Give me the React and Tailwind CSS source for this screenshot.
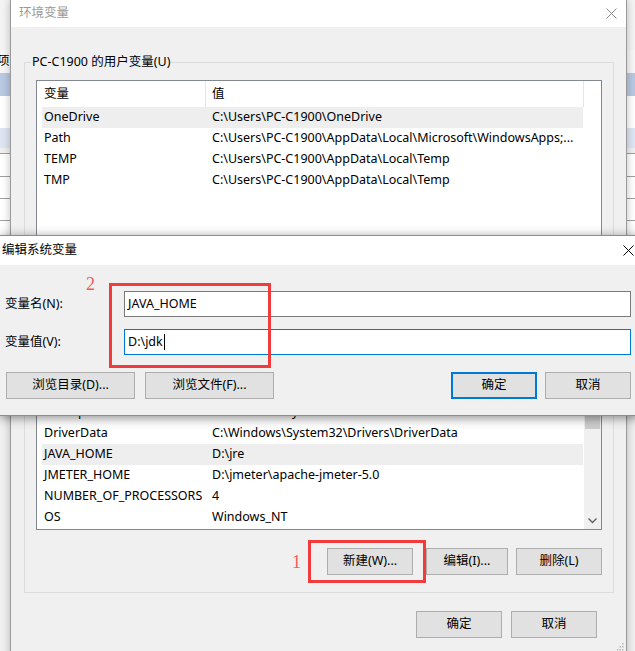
import React from 'react';

const userVars = [
  { name: 'OneDrive', value: 'C:\\Users\\PC-C1900\\OneDrive', active: true },
  { name: 'Path', value: 'C:\\Users\\PC-C1900\\AppData\\Local\\Microsoft\\WindowsApps;...' },
  { name: 'TEMP', value: 'C:\\Users\\PC-C1900\\AppData\\Local\\Temp' },
  { name: 'TMP', value: 'C:\\Users\\PC-C1900\\AppData\\Local\\Temp' },
];

const systemVars = [
  { name: 'ComSpec', value: 'C:\\Windows\\system32\\cmd.exe' },
  { name: 'DriverData', value: 'C:\\Windows\\System32\\Drivers\\DriverData' },
  { name: 'JAVA_HOME', value: 'D:\\jre', active: true },
  { name: 'JMETER_HOME', value: 'D:\\jmeter\\apache-jmeter-5.0' },
  { name: 'NUMBER_OF_PROCESSORS', value: '4' },
  { name: 'OS', value: 'Windows_NT' },
];

function CloseIcon({ color }) {
  return (
    <svg width="11" height="11" viewBox="0 0 11 11" fill="none">
      <path d="M0.5 0.5L10.5 10.5M10.5 0.5L0.5 10.5" stroke={color} strokeWidth="1" />
    </svg>
  );
}

function Button({ children, className = '', primary = false }) {
  return (
    <div
      className={
        primary
          ? `flex h-[27px] items-center justify-center border-2 border-[#0078d7] bg-[#e1e1e1] ${className}`
          : `flex h-[27px] items-center justify-center border border-[#adadad] bg-[#e1e1e1] ${className}`
      }
    >
      {children}
    </div>
  );
}

function Row({ item }) {
  return (
    <div
      className={`ml-[5px] flex h-[21px] w-[541px] shrink-0 items-center whitespace-nowrap ${
        item.active ? 'bg-[#eeeeee]' : ''
      }`}
    >
      <span className="w-[170px] pl-[2px]">{item.name}</span>
      <span>{item.value}</span>
    </div>
  );
}

function ListHeader() {
  return (
    <div className="flex h-[26px] shrink-0 items-center">
      <div className="flex h-full w-[169px] items-center border-r border-[#e5e5e5] pl-[7px]">变量</div>
      <div className="flex h-full w-[378px] items-center border-r border-[#e5e5e5] pl-[6px]">值</div>
    </div>
  );
}

function Group({ title, children }) {
  return (
    <fieldset className="mx-[12px] ml-[13px] border border-[#dcdcdc] px-[6px] pb-[17px]">
      <legend className="px-[1px] leading-[16px]">{title}</legend>
      {children}
    </fieldset>
  );
}

function RowButtons() {
  return (
    <div className="mt-[18px] mr-[5px] flex justify-end">
      <Button className="w-[86px]">新建(W)...</Button>
      <Button className="ml-[13px] w-[82px]">编辑(I)...</Button>
      <Button className="ml-[8px] w-[86px]">删除(L)</Button>
    </div>
  );
}

function BackWindow() {
  return (
    <div className="absolute inset-0 flex flex-col bg-[#f0f0f0]">
      <div className="h-[50px] bg-[#f4f4f4]" />
      <div className="flex h-[23px] items-center bg-[#f7f7f7]">
        <span className="ml-[-3px]">项</span>
      </div>
      <div className="h-[23px] bg-[#b9c9e2]" />
      <div className="h-[32px] bg-white" />
      <div className="h-[20px] bg-[#dde6f2]" />
      <div className="h-[5px] bg-[#f0f0f0]" />
      <div className="h-[23px] border-t border-[#a0a0a0] bg-white" />
      <div className="h-[22px] border-t border-[#a0a0a0] bg-white" />
      <div className="h-[22px] border-t border-[#a0a0a0] bg-white" />
      <div className="h-[20px] border-t border-[#a0a0a0] bg-white" />
    </div>
  );
}

function MainWindow() {
  return (
    <div className="absolute left-[10px] top-0 h-[670px] w-[617px] border-x border-[#9a9a9a] bg-[#f0f0f0] shadow-[0_0_8px_rgba(0,0,0,0.25)]">
      <div className="flex h-[27px] items-center justify-between bg-white pl-[8px] pr-[9px] text-[#999999]">
        <span>环境变量</span>
        <CloseIcon color="#8a8a8a" />
      </div>

      <div className="pt-[27px]">
        <Group title="PC-C1900 的用户变量(U)">
          <div className="mx-[5px] mt-[10px] flex h-[165px] flex-col overflow-hidden border border-[#828790] bg-white">
            <ListHeader />
            {userVars.map((item) => (
              <Row key={item.name} item={item} />
            ))}
          </div>
          <RowButtons />
        </Group>

        <div className="mt-[7px]">
          <Group title="系统变量(S)">
            <div className="mx-[5px] mt-[10px] flex h-[189px] border border-[#828790] bg-white">
              <div className="flex flex-1 flex-col overflow-hidden">
                <ListHeader />
                <div className="flex flex-1 flex-col justify-end overflow-hidden pb-[1px]">
                  {systemVars.map((item) => (
                    <Row key={item.name} item={item} />
                  ))}
                </div>
              </div>
              <div className="flex w-[17px] flex-col bg-[#f0f0f0]">
                <div className="h-[17px]" />
                <div className="mx-[1px] h-[70px] bg-[#cdcdcd]" />
                <div className="flex-1" />
                <div className="flex h-[17px] items-center justify-center">
                  <svg width="9" height="6" viewBox="0 0 9 6" fill="none">
                    <path d="M0.5 0.5L4.5 4.5L8.5 0.5" stroke="#606060" strokeWidth="1.4" />
                  </svg>
                </div>
              </div>
            </div>
            <RowButtons />
          </Group>
        </div>

        <div className="mt-[18px] flex justify-end pr-[29px]">
          <Button className="w-[86px]">确定</Button>
          <Button className="ml-[9px] w-[86px]">取消</Button>
        </div>
      </div>

      <svg className="absolute bottom-[19px] right-[2px]" width="7" height="9" viewBox="0 0 7 9">
        <rect x="5" y="1" width="1.5" height="1.5" fill="#b8b8b8" />
        <rect x="2.5" y="4" width="1.5" height="1.5" fill="#b8b8b8" />
        <rect x="5" y="4" width="1.5" height="1.5" fill="#b8b8b8" />
        <rect x="0" y="7" width="1.5" height="1.5" fill="#b8b8b8" />
        <rect x="2.5" y="7" width="1.5" height="1.5" fill="#b8b8b8" />
        <rect x="5" y="7" width="1.5" height="1.5" fill="#b8b8b8" />
      </svg>
    </div>
  );
}

function EditDialog() {
  return (
    <div className="absolute left-0 top-[235px] w-[640px] border-y border-[#8c8c8c] shadow-[0_2px_10px_rgba(0,0,0,0.45)]">
      <div className="flex h-[29px] items-center justify-between bg-white pl-[2px] pr-[6px]">
        <span>编辑系统变量</span>
        <CloseIcon color="#000000" />
      </div>
      <div className="bg-[#f0f0f0] pb-[16px] pl-[5px] pr-[9px] pt-[26px]">
        <div className="flex items-center">
          <span className="w-[119px]">变量名(N):</span>
          <div className="flex h-[26px] flex-1 items-center border border-[#7a7a7a] bg-white pl-[3px]">
            JAVA_HOME
          </div>
        </div>
        <div className="mt-[12px] flex items-center">
          <span className="w-[119px]">变量值(V):</span>
          <div className="flex h-[26px] flex-1 items-center border border-[#0078d7] bg-white pl-[3px]">
            D:\jdk
            <span className="ml-[1px] inline-block h-[16px] w-[1px] bg-black" />
          </div>
        </div>
        <div className="mt-[17px] flex pl-[1px]">
          <Button className="w-[129px]">浏览目录(D)...</Button>
          <Button className="ml-[10px] w-[129px]">浏览文件(F)...</Button>
          <div className="flex-1" />
          <Button primary className="w-[86px]">确定</Button>
          <Button className="ml-[8px] w-[86px]">取消</Button>
        </div>
      </div>
    </div>
  );
}

export default function App() {
  return (
    <div className="relative h-[651px] w-[635px] overflow-hidden font-['Noto_Sans','Noto_Sans_CJK_SC',sans-serif] text-[12.5px] text-black">
      <BackWindow />
      <MainWindow />
      <EditDialog />

      <div className="absolute left-[109px] top-[283px] h-[85px] w-[162px] border-[3px] border-[#f03c3c]" />
      <span className="absolute left-[86px] top-[275px] font-['Liberation_Serif',serif] text-[18px] leading-[18px] text-[#f25a5a]">
        2
      </span>
      <div className="absolute left-[308px] top-[540px] h-[43px] w-[118px] border-[3px] border-[#f03c3c]" />
      <span className="absolute left-[292px] top-[553px] font-['Liberation_Serif',serif] text-[18px] leading-[18px] text-[#f25a5a]">
        1
      </span>
    </div>
  );
}
